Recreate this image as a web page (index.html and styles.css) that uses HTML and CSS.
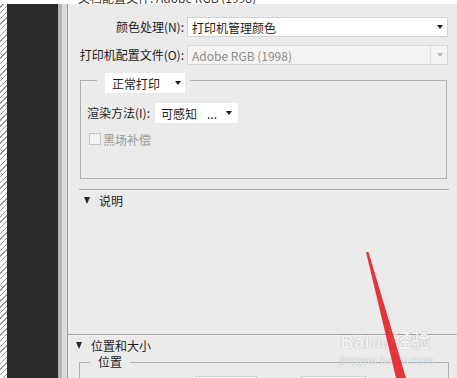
FILE: index.html
```html
<!DOCTYPE html>
<html lang="zh-CN">
<head>
    <meta charset="UTF-8">
    <meta name="viewport" content="width=device-width, initial-scale=1.0">
    <title>打印设置</title>
    <link rel="stylesheet" href="styles.css">
</head>
<body>
    <div class="shot">
        <div class="cut"><span>文档配置文件: Adobe RGB (1998)</span></div>
        <div class="main">
            <div class="hatch"></div>
            <div class="dark"></div>
            <div class="edge"></div>
            <div class="panel">
                <div class="form">
                    <label>颜色处理(N):</label>
                    <div class="select"><span>打印机管理颜色</span><i class="arr"></i></div>
                    <label>打印机配置文件(O):</label>
                    <div class="select disabled"><span>Adobe RGB (1998)</span><i class="sep"></i><i class="arr"></i></div>
                </div>

                <fieldset class="group">
                    <legend class="legend-select">
                        <div class="select mini"><span>正常打印</span><i class="arr"></i></div>
                    </legend>
                    <div class="row">
                        <label>渲染方法(I):</label>
                        <div class="select intent"><span>可感知</span><span class="dots">...</span><i class="arr"></i></div>
                    </div>
                    <div class="check-row">
                        <span class="checkbox"></span>
                        <span class="muted">黑场补偿</span>
                    </div>
                </fieldset>

                <div class="rule rule-short"></div>
                <div class="section section-desc"><i class="tri"></i><span>说明</span></div>

                <div class="spacer"></div>

                <div class="rule"></div>
                <div class="section section-pos"><i class="tri"></i><span>位置和大小</span></div>
                <fieldset class="group group-pos">
                    <legend class="legend-text">位置</legend>
                    <div class="pos-row">
                        <span class="pos-label"></span>
                        <div class="box box-a"></div>
                        <span class="pos-label2"></span>
                        <div class="box box-b"></div>
                    </div>
                </fieldset>
            </div>
        </div>

        <div class="watermark">
            <div class="wm-logo">Bai<span class="paw">du</span>经验</div>
            <div class="wm-url">jingyan.baidu.com</div>
        </div>

        <svg class="arrow" width="457" height="378" viewBox="0 0 457 378">
            <polygon points="366,252 368.5,252 406,378 396,378" fill="#e3262a" opacity="0.92"/>
        </svg>
    </div>
</body>
</html>
```

FILE: styles.css
```css
body {
    margin: 0;
    font-family: "Noto Sans CJK SC", "Liberation Sans", sans-serif;
    font-size: 12px;
    color: #1c1c1c;
}
.shot {
    position: relative;
    width: 457px;
    height: 378px;
    overflow: hidden;
    background: #ebebeb;
}
.cut {
    height: 4px;
    overflow: hidden;
    background: #fff;
    padding-left: 78px;
}
.cut span {
    display: block;
    line-height: 12px;
    margin-top: -8px;
    color: #333;
}
.main {
    display: flex;
    height: 374px;
}
.hatch {
    width: 7px;
    background: repeating-linear-gradient(135deg, #fff 0 2px, #9a9a9a 2px 3px, #fff 3px 4px);
}
.dark {
    width: 51px;
    background: #2b2b2b;
}
.edge {
    width: 10px;
    background: linear-gradient(90deg, #b3b3b3 0 4px, #dcdcdc 4px 9px, #9c9c9c 9px 10px);
}
.panel {
    flex: 1;
    display: flex;
    flex-direction: column;
    background: #ebebeb;
    overflow: hidden;
}
.panel > * {
    flex-shrink: 0;
}
.form {
    display: grid;
    grid-template-columns: 116px 1fr;
    column-gap: 3px;
    row-gap: 8px;
    padding: 13px 9px 0 0;
}
.form label {
    text-align: right;
    line-height: 20px;
    white-space: nowrap;
}
.select {
    display: flex;
    align-items: center;
    height: 20px;
    box-sizing: border-box;
    background: #fff;
    border: 1px solid #d2d2d2;
    padding-left: 4px;
}
.select span {
    flex: 1;
    white-space: nowrap;
}
.arr {
    width: 0;
    height: 0;
    border-left: 3.5px solid transparent;
    border-right: 3.5px solid transparent;
    border-top: 4px solid #1e1e1e;
    margin-right: 4px;
}
.disabled {
    background: #f4f4f4;
    border-color: #d6d6d6;
    color: #8c8c8c;
}
.disabled .arr {
    border-top-color: #b4b4b4;
}
.sep {
    align-self: stretch;
    width: 1px;
    background: #e0e0e0;
    margin-right: 6px;
}
.group {
    margin: 2px 10px 0 12px;
    padding: 0 0 33px 6px;
    border: 1px solid #b0b0b0;
    min-width: 0;
}
.legend-select {
    margin-left: 10px;
    padding: 6px 5px 0 8px;
}
.mini {
    width: 80px;
    border: none;
    padding-left: 7px;
}
.mini .arr {
    margin-right: 4px;
}
.row {
    display: flex;
    align-items: center;
    gap: 5px;
    margin-top: 10px;
}
.row label {
    line-height: 20px;
}
.intent {
    width: 83px;
    border: none;
    padding-left: 6px;
}
.intent span {
    flex: none;
}
.dots {
    margin-left: 10px;
    margin-right: 9px;
}
.check-row {
    display: flex;
    align-items: center;
    gap: 2px;
    margin-top: 10px;
    padding-left: 2px;
    height: 12px;
}
.checkbox {
    width: 10px;
    height: 10px;
    border: 1px solid #c4c4c4;
    background: #f2f2f2;
}
.muted {
    color: #9a9a9a;
}
.rule {
    height: 1px;
    background: #a3a3a3;
    box-shadow: 0 1px 0 #f6f6f6;
}
.rule-short {
    margin: 10px 8px 0 11px;
}
.section {
    display: flex;
    align-items: center;
    gap: 9px;
    height: 20px;
}
.section-desc {
    padding-left: 16px;
}
.section-pos {
    padding-left: 8px;
    height: 18px;
    margin-top: 1px;
}
.tri {
    width: 0;
    height: 0;
    border-left: 3.5px solid transparent;
    border-right: 3.5px solid transparent;
    border-top: 7px solid #2a2a2a;
}
.spacer {
    height: 124px;
}
.group-pos {
    margin: 1px 8px 0 11px;
    padding: 0 0 20px 0;
}
.legend-text {
    margin-left: 10px;
    padding: 0 8px;
    line-height: 14px;
}
.pos-row {
    display: flex;
    align-items: flex-start;
    margin-top: 7px;
}
.pos-label {
    width: 116px;
}
.pos-label2 {
    width: 44px;
}
.box {
    height: 20px;
    background: #fff;
    border: 1px solid #d0d0d0;
    box-sizing: border-box;
}
.box-a {
    width: 61px;
}
.box-b {
    width: 65px;
}
.watermark {
    position: absolute;
    left: 340px;
    top: 330px;
    color: rgba(255, 255, 255, 0.88);
    text-shadow: 0 0 1px rgba(110, 110, 110, 0.7);
    pointer-events: none;
}
.wm-logo {
    font-family: "Liberation Sans", "Noto Sans CJK SC", sans-serif;
    font-weight: bold;
    font-size: 19px;
    line-height: 23px;
}
.paw {
    font-size: 15px;
    margin: 0 2px;
}
.wm-url {
    font-family: "Liberation Sans", sans-serif;
    font-size: 11px;
    line-height: 12px;
    letter-spacing: 0.3px;
}
.arrow {
    position: absolute;
    left: 0;
    top: 0;
    pointer-events: none;
}
```
